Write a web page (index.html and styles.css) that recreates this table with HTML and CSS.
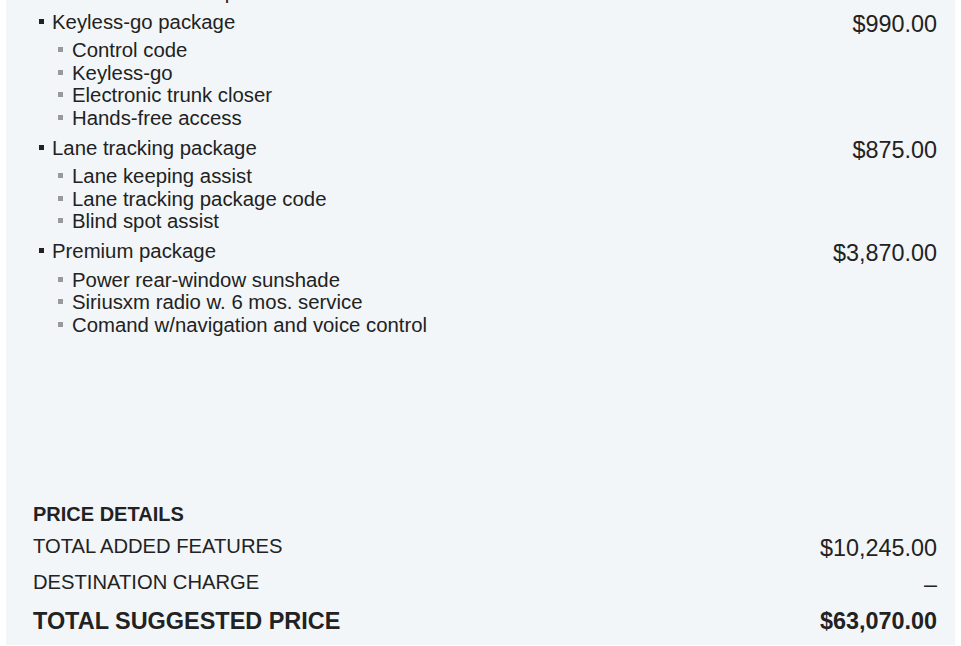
FILE: index.html
```html
<!DOCTYPE html>
<html lang="en">
<head>
<meta charset="utf-8">
<title>Price summary</title>
<link rel="stylesheet" href="styles.css">
</head>
<body>
<main class="panel">
  <ul class="packages">
    <li class="pkg">
      <div class="pkg-main">
        <div class="pkg-name">Exterior lighting package</div>
        <ul class="subs">
          <li>Adaptive highbeam assist</li>
          <li>Active LED headlamps</li>
          <li>LED footwell lamps</li>
        </ul>
      </div>
      <div class="pkg-price">$1,090.00</div>
    </li>
    <li class="pkg">
      <div class="pkg-main">
        <div class="pkg-name">Keyless-go package</div>
        <ul class="subs">
          <li>Control code</li>
          <li>Keyless-go</li>
          <li>Electronic trunk closer</li>
          <li>Hands-free access</li>
        </ul>
      </div>
      <div class="pkg-price">$990.00</div>
    </li>
    <li class="pkg">
      <div class="pkg-main">
        <div class="pkg-name">Lane tracking package</div>
        <ul class="subs">
          <li>Lane keeping assist</li>
          <li>Lane tracking package code</li>
          <li>Blind spot assist</li>
        </ul>
      </div>
      <div class="pkg-price">$875.00</div>
    </li>
    <li class="pkg">
      <div class="pkg-main">
        <div class="pkg-name">Premium package</div>
        <ul class="subs">
          <li>Power rear-window sunshade</li>
          <li>Siriusxm radio w. 6 mos. service</li>
          <li>Comand w/navigation and voice control</li>
        </ul>
      </div>
      <div class="pkg-price">$3,870.00</div>
    </li>
  </ul>

  <section class="price-details">
    <h3 class="pd-title">PRICE DETAILS</h3>
    <div class="pd-row">
      <span class="pd-label">TOTAL ADDED FEATURES</span>
      <span class="pd-value">$10,245.00</span>
    </div>
    <div class="pd-row pd-second">
      <span class="pd-label">DESTINATION CHARGE</span>
      <span class="pd-value">–</span>
    </div>
    <div class="pd-row pd-total">
      <span class="pd-label">TOTAL SUGGESTED PRICE</span>
      <span class="pd-value">$63,070.00</span>
    </div>
  </section>
</main>
</body>
</html>
```

FILE: styles.css
```css
html, body {
  margin: 0;
  padding: 0;
  background: #ffffff;
}

body {
  font-family: "Liberation Sans", Arial, sans-serif;
  color: #222222;
}

.panel {
  margin: -108.7px 6px 0 6px;
  padding: 16px 18px 9px 27px;
  background: #f2f6f9;
}

.packages {
  list-style: none;
  margin: 0;
  padding: 0;
}

.pkg {
  display: flex;
  justify-content: space-between;
  align-items: flex-start;
  margin-bottom: 7.5px;
}

.pkg:last-child {
  margin-bottom: 0;
}

.pkg-main {
  padding-left: 6px;
}

.pkg-name {
  font-size: 20.35px;
  line-height: 22.5px;
  white-space: nowrap;
}

.pkg-name::before {
  content: "";
  display: inline-block;
  width: 5px;
  height: 5px;
  background: #222222;
  margin-right: 8px;
  vertical-align: 5px;
}

.subs {
  list-style: none;
  margin: 6px 0 0 0;
  padding: 0 0 0 19px;
}

.subs li {
  font-size: 20.35px;
  line-height: 22.5px;
  white-space: nowrap;
}

.subs li::before {
  content: "";
  display: inline-block;
  width: 5px;
  height: 5px;
  background: #999999;
  margin-right: 9px;
  vertical-align: 5px;
}

.pkg-price {
  flex: none;
  font-size: 23.4px;
  line-height: 26.5px;
  white-space: nowrap;
}

.price-details {
  margin-top: 165.2px;
}

.pd-title {
  margin: 0;
  font-size: 20px;
  line-height: 24px;
  font-weight: 700;
}

.pd-row {
  display: flex;
  justify-content: space-between;
  align-items: flex-start;
  margin-top: 7px;
}

.pd-second {
  margin-top: 6px;
}

.pd-label {
  font-size: 20.2px;
  line-height: 26px;
}

.pd-value {
  font-size: 23.4px;
  line-height: 30px;
}

.pd-total {
  margin-top: 7px;
  font-weight: 700;
}

.pd-total .pd-label {
  font-size: 23.45px;
  line-height: 30px;
}
```
